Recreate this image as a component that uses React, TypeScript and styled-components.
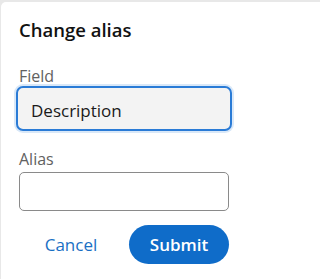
import React from "react";
import styled, { createGlobalStyle } from "styled-components";

const Global = createGlobalStyle`
  html, body { margin: 0; padding: 0; background: #e8e8e8; }
  body { font-family: "Open Sans", "Noto Sans", sans-serif; }
  #root { height: 279px; overflow: hidden; }
`;

const Card = styled.div`
  margin: 2px 0 0 1px;
  height: 277px;
  background: #ffffff;
  border-radius: 5px 0 0 0;
  padding: 16px 0 0 18px;
  box-sizing: border-box;
  display: flex;
  flex-direction: column;
  align-items: flex-start;
`;

const Title = styled.h2`
  margin: 0;
  font-size: 18.5px;
  font-weight: 600;
  color: #111111;
  line-height: 24px;
`;

const Label = styled.label<{ $top: number }>`
  display: block;
  font-size: 16px;
  color: #616161;
  line-height: 20px;
  margin-top: ${(p) => p.$top}px;
`;

const Input = styled.div<{ $focused?: boolean }>`
  box-sizing: border-box;
  display: flex;
  align-items: center;
  font-size: 17px;
  color: #1a1a1a;
  ${(p) =>
    p.$focused
      ? `
    margin: 0 0 0 -3px;
    width: 216px;
    height: 45px;
    background: #f3f3f3;
    border: 2px solid #2a7bd6;
    border-radius: 7px;
    box-shadow: 0 0 0 2px #d9e8f8;
    padding: 3px 0 0 13px;
  `
      : `
    margin: 3px 0 0 0;
    width: 210px;
    height: 39px;
    background: #ffffff;
    border: 1px solid #8a8a8a;
    border-radius: 5px;
  `}
`;

const Actions = styled.div`
  display: flex;
  align-items: center;
  gap: 6px;
  margin-top: 14px;
  width: 210px;
`;

const LinkButton = styled.button`
  border: none;
  background: none;
  font-family: inherit;
  font-size: 17px;
  color: #1a6fc4;
  width: 104px;
  padding: 0;
  height: 39px;
  text-align: center;
`;

const PrimaryButton = styled.button`
  border: none;
  background: #0f6cc9;
  color: #ffffff;
  font-family: inherit;
  font-size: 17px;
  font-weight: 600;
  width: 100px;
  height: 39px;
  border-radius: 20px;
  padding: 0;
`;

export default function App() {
  return (
    <>
      <Global />
      <Card>
        <Title>Change alias</Title>
        <Label $top={24}>Field</Label>
        <Input $focused>Description</Input>
        <Label $top={18}>Alias</Label>
        <Input />
        <Actions>
          <LinkButton>Cancel</LinkButton>
          <PrimaryButton>Submit</PrimaryButton>
        </Actions>
      </Card>
    </>
  );
}
